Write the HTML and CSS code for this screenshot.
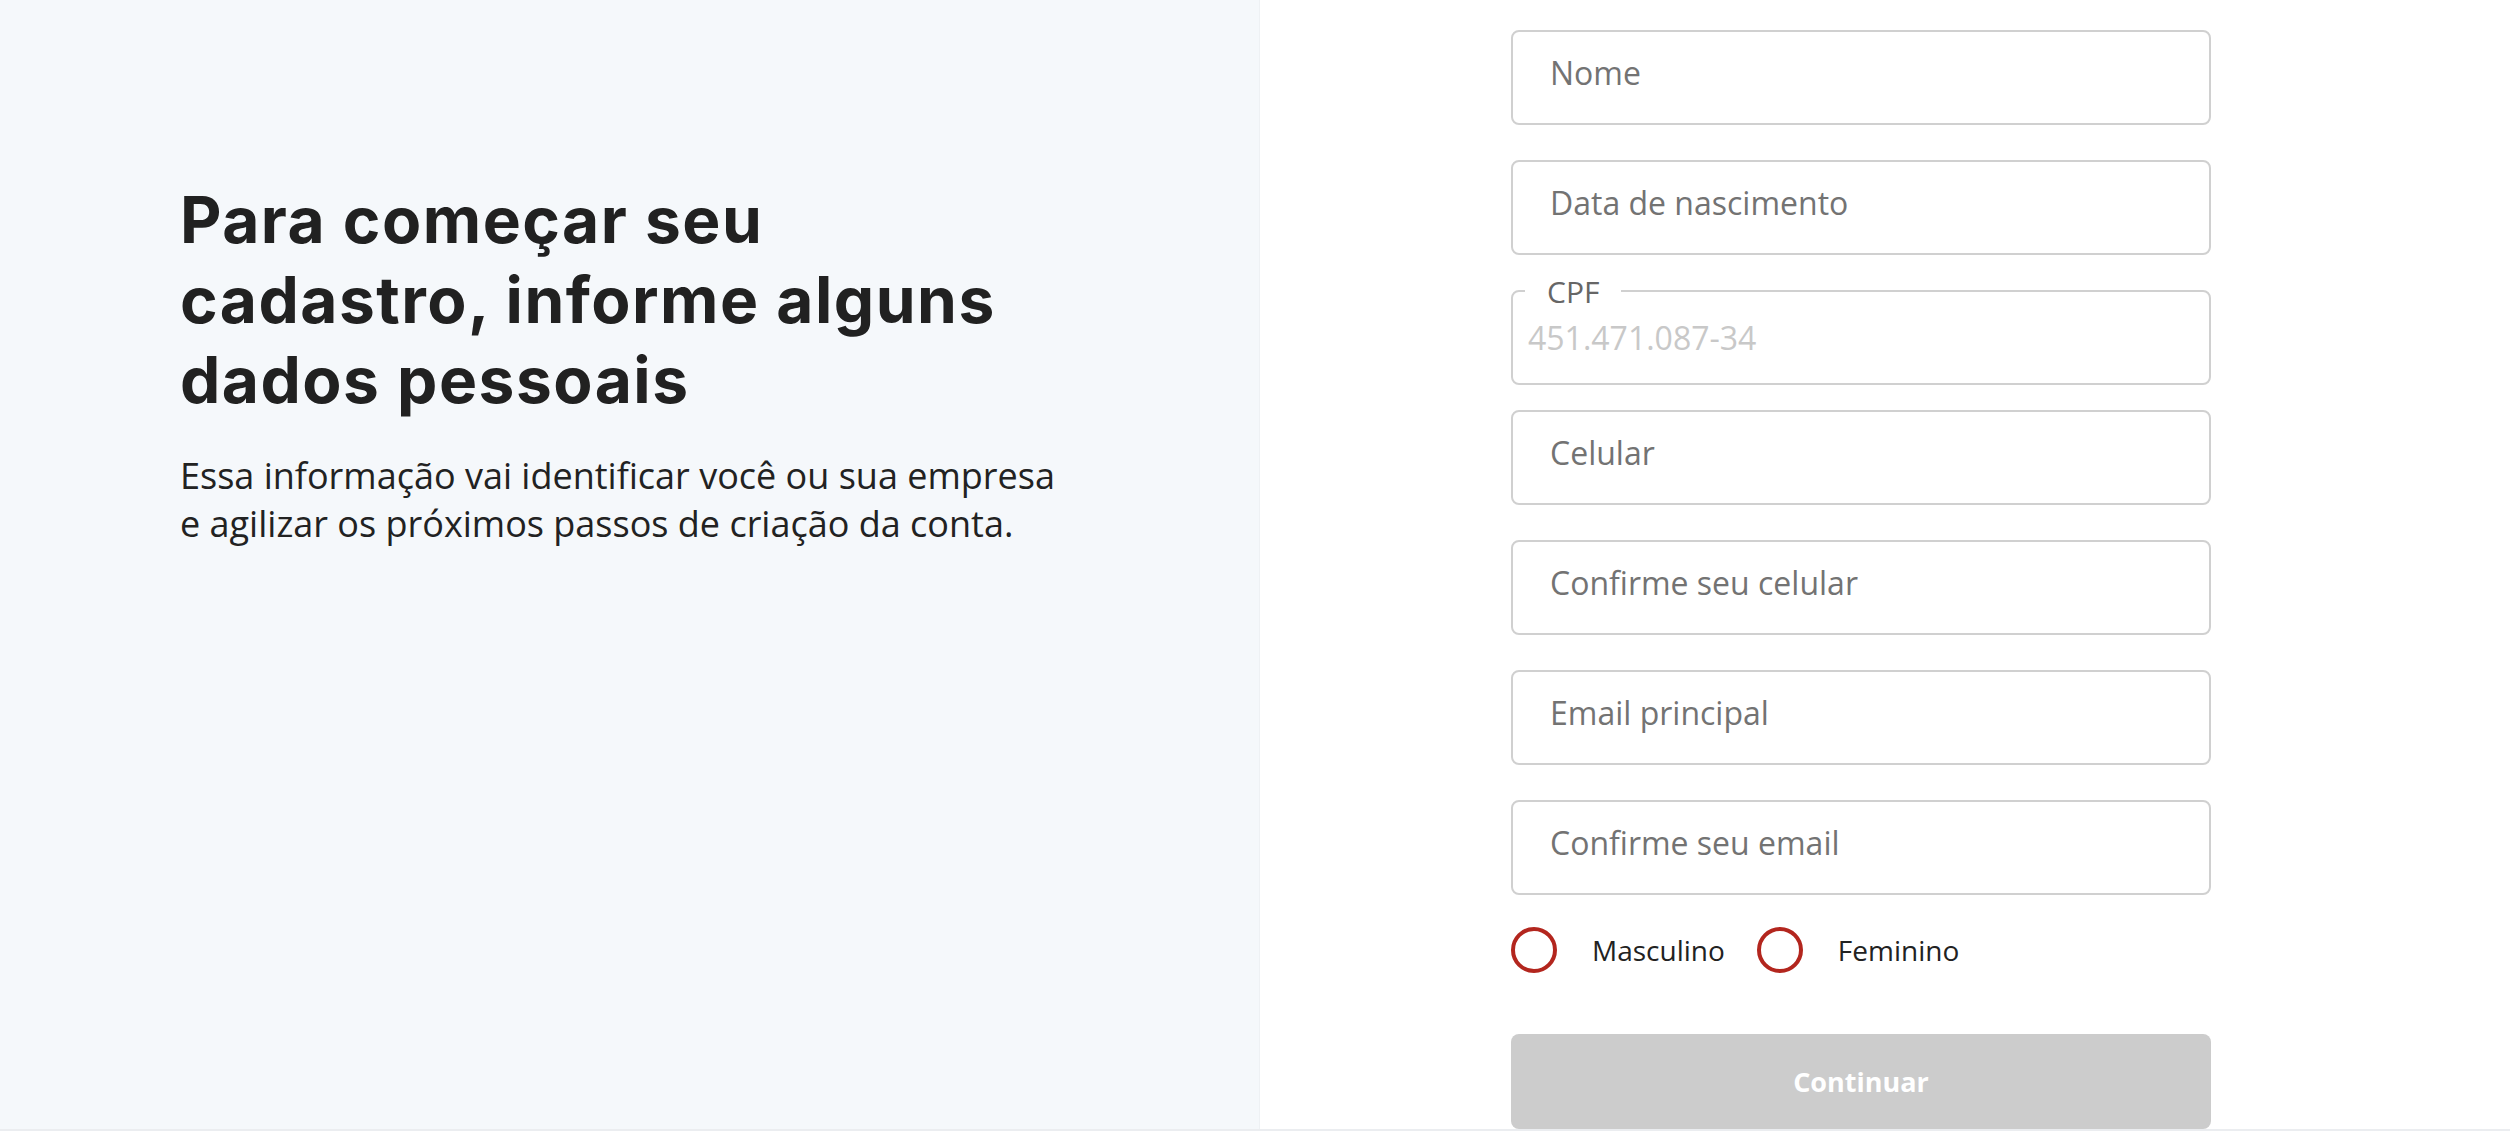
FILE: index.html
```html
<!DOCTYPE html>
<html lang="pt-BR">
<head>
<meta charset="utf-8">
<title>Cadastro</title>
<link rel="stylesheet" href="styles.css">
</head>
<body>
<div class="page">
  <main class="layout">
    <section class="intro">
      <h1 class="intro-title">Para começar seu<br>cadastro, informe alguns<br>dados pessoais</h1>
      <p class="intro-text">Essa informação vai identificar você ou sua empresa<br>e agilizar os próximos passos de criação da conta.</p>
    </section>
    <section class="form-panel">
      <form class="form">
        <div class="field"><input class="input" type="text" placeholder="Nome"></div>
        <div class="field"><input class="input" type="text" placeholder="Data de nascimento"></div>
        <div class="field field-filled">
          <label class="float-label">CPF</label>
          <input class="input input-filled" type="text" value="451.471.087-34">
        </div>
        <div class="field"><input class="input" type="text" placeholder="Celular"></div>
        <div class="field"><input class="input" type="text" placeholder="Confirme seu celular"></div>
        <div class="field"><input class="input" type="text" placeholder="Email principal"></div>
        <div class="field"><input class="input" type="text" placeholder="Confirme seu email"></div>
        <div class="radios">
          <label class="radio"><span class="radio-circle"></span><span class="radio-text">Masculino</span></label>
          <label class="radio"><span class="radio-circle"></span><span class="radio-text">Feminino</span></label>
        </div>
        <button class="btn" type="button">Continuar</button>
      </form>
    </section>
  </main>
  <div class="bottom-rule"></div>
</div>
</body>
</html>
```
FILE: styles.css
```css
* { box-sizing: border-box; }
html, body { margin: 0; padding: 0; background: #ffffff; }
body { font-family: "Open Sans", "Liberation Sans", sans-serif; color: #222222; }

.page { width: 2510px; height: 1140px; overflow: hidden; }

.layout { display: flex; height: 1129px; }

.intro {
  width: 1260px;
  flex: 0 0 1260px;
  background: #f5f8fb;
  border-right: 1px solid #eef1f4;
  padding: 180px 0 0 180px;
}

.intro-title {
  margin: 0;
  font-family: "Inter", "Liberation Sans", sans-serif;
  font-weight: 700;
  font-size: 64px;
  line-height: 80px;
  letter-spacing: 1.5px;
  color: #212121;
}

.intro-text {
  margin: 32px 0 0 0;
  font-family: "Open Sans", "Liberation Sans", sans-serif;
  font-size: 36px;
  line-height: 48px;
  color: #222222;
}

.form-panel {
  flex: 1;
  padding: 30px 0 0 251px;
  background: #ffffff;
}

.form { width: 700px; display: flex; flex-direction: column; }

.field { position: relative; margin-bottom: 35px; }
.field-filled { margin-bottom: 25px; }

.input {
  display: block;
  width: 100%;
  height: 95px;
  border: 2px solid #d0d0d0;
  border-radius: 8px;
  background: #ffffff;
  padding: 0 20px 10px 37px;
  font-family: "Open Sans", "Liberation Sans", sans-serif;
  font-size: 32px;
  color: #737373;
  outline: none;
}
.input::placeholder { color: #737373; opacity: 1; }

.input-filled {
  padding: 0 20px 0 15px;
  font-size: 32px;
  color: #c8c8c8;
}

.float-label {
  position: absolute;
  left: 14px;
  top: -13px;
  padding: 0 22px;
  background: #ffffff;
  font-size: 30px;
  line-height: 30px;
  color: #666666;
}

.radios { display: flex; align-items: center; gap: 32px; margin: -3px 0 0 0; height: 46px; }
.radio { display: flex; align-items: center; }
.radio-circle {
  width: 46px; height: 46px;
  border: 4px solid #b3261e;
  border-radius: 50%;
  background: #ffffff;
}
.radio-text { margin-left: 35px; font-size: 28px; color: #222222; }

.btn {
  margin-top: 61px;
  height: 95px;
  width: 700px;
  border: none;
  border-radius: 8px;
  background: #cccccc;
  color: #ffffff;
  font-family: "Open Sans", "Liberation Sans", sans-serif;
  font-weight: 700;
  font-size: 27px;
}

.bottom-rule { height: 2px; background: #ebedf0; }
```
